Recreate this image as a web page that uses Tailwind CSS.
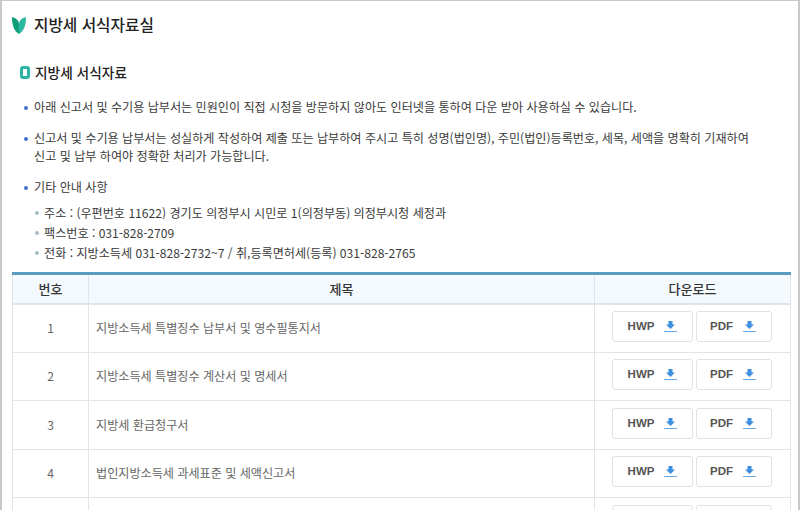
<!DOCTYPE html>
<html lang="ko">
<head>
  <meta charset="UTF-8">
  <title>지방세 서식자료실</title>
  <script src="https://cdn.jsdelivr.net/npm/@tailwindcss/browser@4"></script>
</head>
<body class="bg-white">
  <div class="h-[510px] w-[800px] overflow-hidden border-t border-x-2 border-[#c8c8c8] font-['Noto_Sans_CJK_KR','Noto_Sans',sans-serif] text-[#333]">
    <!-- Page title -->
    <div class="flex h-[38px] items-center gap-[8px] pl-[10px] pt-[10px]">
      <svg width="14" height="17" viewBox="0 0 14 17"><path d="M0 0 C4 1 6.500 3 7 7 V17 C2 14 0 8 0 0Z" fill="#0f9f78"/><path d="M14 0 C10 1 7.500 3 7 7 V17 C12 14 14 8 14 0Z" fill="#2bb8a0"/></svg>
      <h1 class="text-[15.7px] font-medium leading-5 text-[#222]">지방세 서식자료실</h1>
    </div>

    <!-- Section -->
    <div class="mt-[23px] flex items-center gap-[5px] pl-[18px]">
      <span class="h-[13px] w-[10px] rounded-[3px] border-[3px] border-[#2bb5a5]"></span>
      <h2 class="text-[13.700px] font-medium leading-5 text-[#222]">지방세 서식자료</h2>
    </div>

    <div class="mt-[16px] pl-[22px] text-[12.100px] leading-[18px] text-[#3a3a3a]">
      <div class="flex gap-[6px]">
        <span class="mt-[8px] size-[4px] shrink-0 rounded-full bg-[#3f6fc9]"></span>
        <p>아래 신고서 및 수기용 납부서는 민원인이 직접 시청을 방문하지 않아도 인터넷을 통하여 다운 받아 사용하실 수 있습니다.</p>
      </div>
      <div class="mt-[13px] flex gap-[6px]">
        <span class="mt-[8px] size-[4px] shrink-0 rounded-full bg-[#3f6fc9]"></span>
        <p>신고서 및 수기용 납부서는 성실하게 작성하여 제출 또는 납부하여 주시고 특히 성명(법인명), 주민(법인)등록번호, 세목, 세액을 명확히 기재하여<br>신고 및 납부 하여야 정확한 처리가 가능합니다.</p>
      </div>
      <div class="mt-[13px] flex gap-[6px]">
        <span class="mt-[8px] size-[4px] shrink-0 rounded-full bg-[#3f6fc9]"></span>
        <p>기타 안내 사항</p>
      </div>
      <ul class="mt-[8px] flex flex-col gap-[2px] pl-[11px]">
        <li class="flex gap-[5px]"><span class="mt-[7px] size-[4px] shrink-0 rounded-full bg-[#a9bcc9]"></span>주소 : (우편번호 11622) 경기도 의정부시 시민로 1(의정부동) 의정부시청 세정과</li>
        <li class="flex gap-[5px]"><span class="mt-[7px] size-[4px] shrink-0 rounded-full bg-[#a9bcc9]"></span>팩스번호 : 031-828-2709</li>
        <li class="flex gap-[5px]"><span class="mt-[7px] size-[4px] shrink-0 rounded-full bg-[#a9bcc9]"></span>전화 : 지방소득세 031-828-2732~7 / 취,등록면허세(등록) 031-828-2765</li>
      </ul>
    </div>

    <!-- Table -->
    <table class="mt-[10px] ml-[10px] w-[778px] table-fixed border-collapse border-t-[3px] border-[#5a9dc0] text-[12.100px]">
      <colgroup><col class="w-[76px]"><col class="w-[506px]"><col class="w-[196px]"></colgroup>
      <thead>
        <tr class="h-[30px] bg-[#f3f9fd] text-[13px] text-[#333]">
          <th class="border border-t-0 border-b-2 border-[#dfe5ea] font-medium">번호</th>
          <th class="border border-t-0 border-b-2 border-[#dfe5ea] font-medium">제목</th>
          <th class="border border-t-0 border-b-2 border-[#dfe5ea] font-medium">다운로드</th>
        </tr>
      </thead>
      <tbody class="text-[#666]">
        <tr class="h-[48.500px]">
          <td class="border border-[#e4e4e4] text-center">1</td>
          <td class="border border-[#e4e4e4] pl-[7px]">지방소득세 특별징수 납부서 및 영수필통지서</td>
          <td class="border border-[#e4e4e4]">
            <div class="flex gap-[3px] pb-[3px] pl-[17px]">
              <a class="flex h-[31px] w-[81px] items-center justify-center gap-[10px] rounded-[3px] border border-[#e2e2e2] font-['Liberation_Sans',sans-serif] text-[11.500px] font-bold text-[#555]">HWP<svg width="13" height="11" viewBox="0 0 13 11"><path d="M4.500 0h4v3.500h2.500L6.500 8 2 3.500h2.500z" fill="#3f8fe0"/><path d="M0 10h13v1H0z" fill="#6aa8e6"/></svg></a>
              <a class="flex h-[31px] w-[76px] items-center justify-center gap-[10px] rounded-[3px] border border-[#e2e2e2] pr-[2px] font-['Liberation_Sans',sans-serif] text-[11.500px] font-bold text-[#555]">PDF<svg width="13" height="11" viewBox="0 0 13 11"><path d="M4.500 0h4v3.500h2.500L6.500 8 2 3.500h2.500z" fill="#3f8fe0"/><path d="M0 10h13v1H0z" fill="#6aa8e6"/></svg></a>
            </div>
          </td>
        </tr>
        <tr class="h-[48.500px]">
          <td class="border border-[#e4e4e4] text-center">2</td>
          <td class="border border-[#e4e4e4] pl-[7px]">지방소득세 특별징수 계산서 및 명세서</td>
          <td class="border border-[#e4e4e4]">
            <div class="flex gap-[3px] pb-[3px] pl-[17px]">
              <a class="flex h-[31px] w-[81px] items-center justify-center gap-[10px] rounded-[3px] border border-[#e2e2e2] font-['Liberation_Sans',sans-serif] text-[11.500px] font-bold text-[#555]">HWP<svg width="13" height="11" viewBox="0 0 13 11"><path d="M4.500 0h4v3.500h2.500L6.500 8 2 3.500h2.500z" fill="#3f8fe0"/><path d="M0 10h13v1H0z" fill="#6aa8e6"/></svg></a>
              <a class="flex h-[31px] w-[76px] items-center justify-center gap-[10px] rounded-[3px] border border-[#e2e2e2] pr-[2px] font-['Liberation_Sans',sans-serif] text-[11.500px] font-bold text-[#555]">PDF<svg width="13" height="11" viewBox="0 0 13 11"><path d="M4.500 0h4v3.500h2.500L6.500 8 2 3.500h2.500z" fill="#3f8fe0"/><path d="M0 10h13v1H0z" fill="#6aa8e6"/></svg></a>
            </div>
          </td>
        </tr>
        <tr class="h-[48.500px]">
          <td class="border border-[#e4e4e4] text-center">3</td>
          <td class="border border-[#e4e4e4] pl-[7px]">지방세 환급청구서</td>
          <td class="border border-[#e4e4e4]">
            <div class="flex gap-[3px] pb-[3px] pl-[17px]">
              <a class="flex h-[31px] w-[81px] items-center justify-center gap-[10px] rounded-[3px] border border-[#e2e2e2] font-['Liberation_Sans',sans-serif] text-[11.500px] font-bold text-[#555]">HWP<svg width="13" height="11" viewBox="0 0 13 11"><path d="M4.500 0h4v3.500h2.500L6.500 8 2 3.500h2.500z" fill="#3f8fe0"/><path d="M0 10h13v1H0z" fill="#6aa8e6"/></svg></a>
              <a class="flex h-[31px] w-[76px] items-center justify-center gap-[10px] rounded-[3px] border border-[#e2e2e2] pr-[2px] font-['Liberation_Sans',sans-serif] text-[11.500px] font-bold text-[#555]">PDF<svg width="13" height="11" viewBox="0 0 13 11"><path d="M4.500 0h4v3.500h2.500L6.500 8 2 3.500h2.500z" fill="#3f8fe0"/><path d="M0 10h13v1H0z" fill="#6aa8e6"/></svg></a>
            </div>
          </td>
        </tr>
        <tr class="h-[48.500px]">
          <td class="border border-[#e4e4e4] text-center">4</td>
          <td class="border border-[#e4e4e4] pl-[7px]">법인지방소득세 과세표준 및 세액신고서</td>
          <td class="border border-[#e4e4e4]">
            <div class="flex gap-[3px] pb-[3px] pl-[17px]">
              <a class="flex h-[31px] w-[81px] items-center justify-center gap-[10px] rounded-[3px] border border-[#e2e2e2] font-['Liberation_Sans',sans-serif] text-[11.500px] font-bold text-[#555]">HWP<svg width="13" height="11" viewBox="0 0 13 11"><path d="M4.500 0h4v3.500h2.500L6.500 8 2 3.500h2.500z" fill="#3f8fe0"/><path d="M0 10h13v1H0z" fill="#6aa8e6"/></svg></a>
              <a class="flex h-[31px] w-[76px] items-center justify-center gap-[10px] rounded-[3px] border border-[#e2e2e2] pr-[2px] font-['Liberation_Sans',sans-serif] text-[11.500px] font-bold text-[#555]">PDF<svg width="13" height="11" viewBox="0 0 13 11"><path d="M4.500 0h4v3.500h2.500L6.500 8 2 3.500h2.500z" fill="#3f8fe0"/><path d="M0 10h13v1H0z" fill="#6aa8e6"/></svg></a>
            </div>
          </td>
        </tr>
        <tr class="h-[48.500px]">
          <td class="border border-[#e4e4e4]"></td>
          <td class="border border-[#e4e4e4]"></td>
          <td class="border border-[#e4e4e4]">
            <div class="flex gap-[3px] pb-[3px] pl-[17px]">
              <a class="h-[31px] w-[81px] rounded-[3px] border border-[#e2e2e2]"></a>
              <a class="h-[31px] w-[76px] rounded-[3px] border border-[#e2e2e2]"></a>
            </div>
          </td>
        </tr>
      </tbody>
    </table>
  </div>
</body>
</html>
